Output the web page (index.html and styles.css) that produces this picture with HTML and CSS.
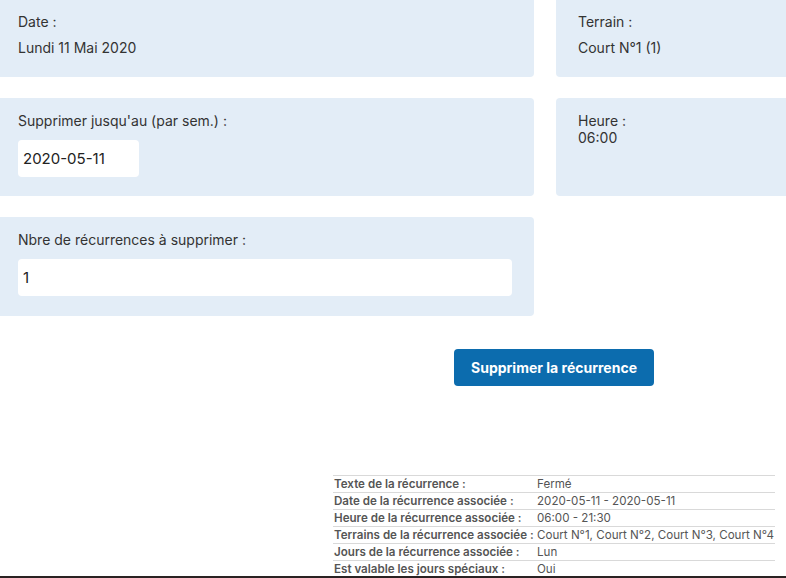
FILE: index.html
```html
<!DOCTYPE html>
<html lang="fr">
<head>
<meta charset="utf-8">
<title>Supprimer la récurrence</title>
<link rel="stylesheet" href="styles.css">
</head>
<body>
<div class="page">
  <div class="grid">
    <div class="panel panel-info">
      <div class="label">Date :</div>
      <div class="value">Lundi 11 Mai 2020</div>
    </div>
    <div class="panel panel-info">
      <div class="label">Terrain :</div>
      <div class="value">Court N°1 (1)</div>
    </div>
    <div class="panel panel-field">
      <div class="label">Supprimer jusqu'au (par sem.) :</div>
      <div class="input input-date">2020-05-11</div>
    </div>
    <div class="panel panel-time">
      <div class="tight">Heure :</div>
      <div class="tight">06:00</div>
    </div>
    <div class="panel panel-field panel-last">
      <div class="label">Nbre de récurrences à supprimer :</div>
      <div class="input input-wide">1</div>
    </div>
  </div>
  <div class="actions">
    <button class="btn">Supprimer la récurrence</button>
  </div>
  <table class="details">
    <tr><th>Texte de la récurrence :</th><td>Fermé</td></tr>
    <tr><th>Date de la récurrence associée :</th><td>2020-05-11 - 2020-05-11</td></tr>
    <tr><th>Heure de la récurrence associée :</th><td>06:00 - 21:30</td></tr>
    <tr><th>Terrains de la récurrence associée :</th><td>Court N°1, Court N°2, Court N°3, Court N°4</td></tr>
    <tr><th>Jours de la récurrence associée :</th><td>Lun</td></tr>
    <tr><th>Est valable les jours spéciaux :</th><td>Oui</td></tr>
  </table>
  <div class="bottom-line"></div>
</div>
</body>
</html>
```
FILE: styles.css
```css
html, body {
  margin: 0;
  padding: 0;
  background: #ffffff;
  overflow: hidden;
}
body {
  font-family: Inter, "Noto Sans", "Liberation Sans", sans-serif;
  font-size: 14px;
  color: #333333;
  width: 786px;
  height: 578px;
}
.page {
  width: 786px;
  height: 578px;
  overflow: hidden;
}
.grid {
  display: grid;
  grid-template-columns: 538px 260px;
  column-gap: 22px;
  row-gap: 21px;
  margin-left: -4px;
  margin-top: -6px;
}
.panel {
  background: #e3edf7;
  border-radius: 4px;
  padding-left: 22px;
  padding-right: 22px;
}
.panel-info {
  padding-top: 19px;
  padding-bottom: 20px;
}
.panel-info .label {
  line-height: 18px;
  height: 18px;
}
.panel-info .value {
  line-height: 18px;
  height: 18px;
  margin-top: 8px;
}
.panel-field {
  padding-top: 14px;
  padding-bottom: 19px;
}
.panel-last {
  padding-bottom: 20px;
}
.panel-field .label {
  line-height: 18px;
  height: 18px;
  margin-bottom: 10px;
}
.panel-time {
  padding-top: 14px;
}
.tight {
  line-height: 17px;
}
.input {
  background: #ffffff;
  border-radius: 4px;
  height: 37px;
  box-sizing: border-box;
  padding-left: 5px;
  line-height: 37px;
  font-size: 15px;
  color: #222222;
}
.input-date {
  width: 121px;
}
.input-wide {
  width: 494px;
}
.actions {
  display: flex;
  padding-left: 454px;
  margin-top: 33px;
}
.btn {
  width: 200px;
  height: 37px;
  background: #0c6cae;
  color: #ffffff;
  border: none;
  border-radius: 4px;
  font-family: Inter, "Noto Sans", "Liberation Sans", sans-serif;
  font-weight: 700;
  font-size: 14px;
  padding: 0;
}
.details {
  margin-left: 333px;
  margin-top: 89px;
  width: 442px;
  border-collapse: collapse;
  font-size: 11.6px;
  color: #555555;
}
.details tr {
  border-top: 1px solid #d9d9d9;
}
.details th,
.details td {
  height: 16px;
  padding: 0 0 0 1px;
  line-height: 16px;
  text-align: left;
  white-space: nowrap;
}
.details th {
  font-weight: 600;
  width: 202px;
}
.details td {
  font-weight: 400;
}
.bottom-line {
  height: 2px;
  background: #2a2222;
  margin-top: -1px;
  position: relative;
}
```
